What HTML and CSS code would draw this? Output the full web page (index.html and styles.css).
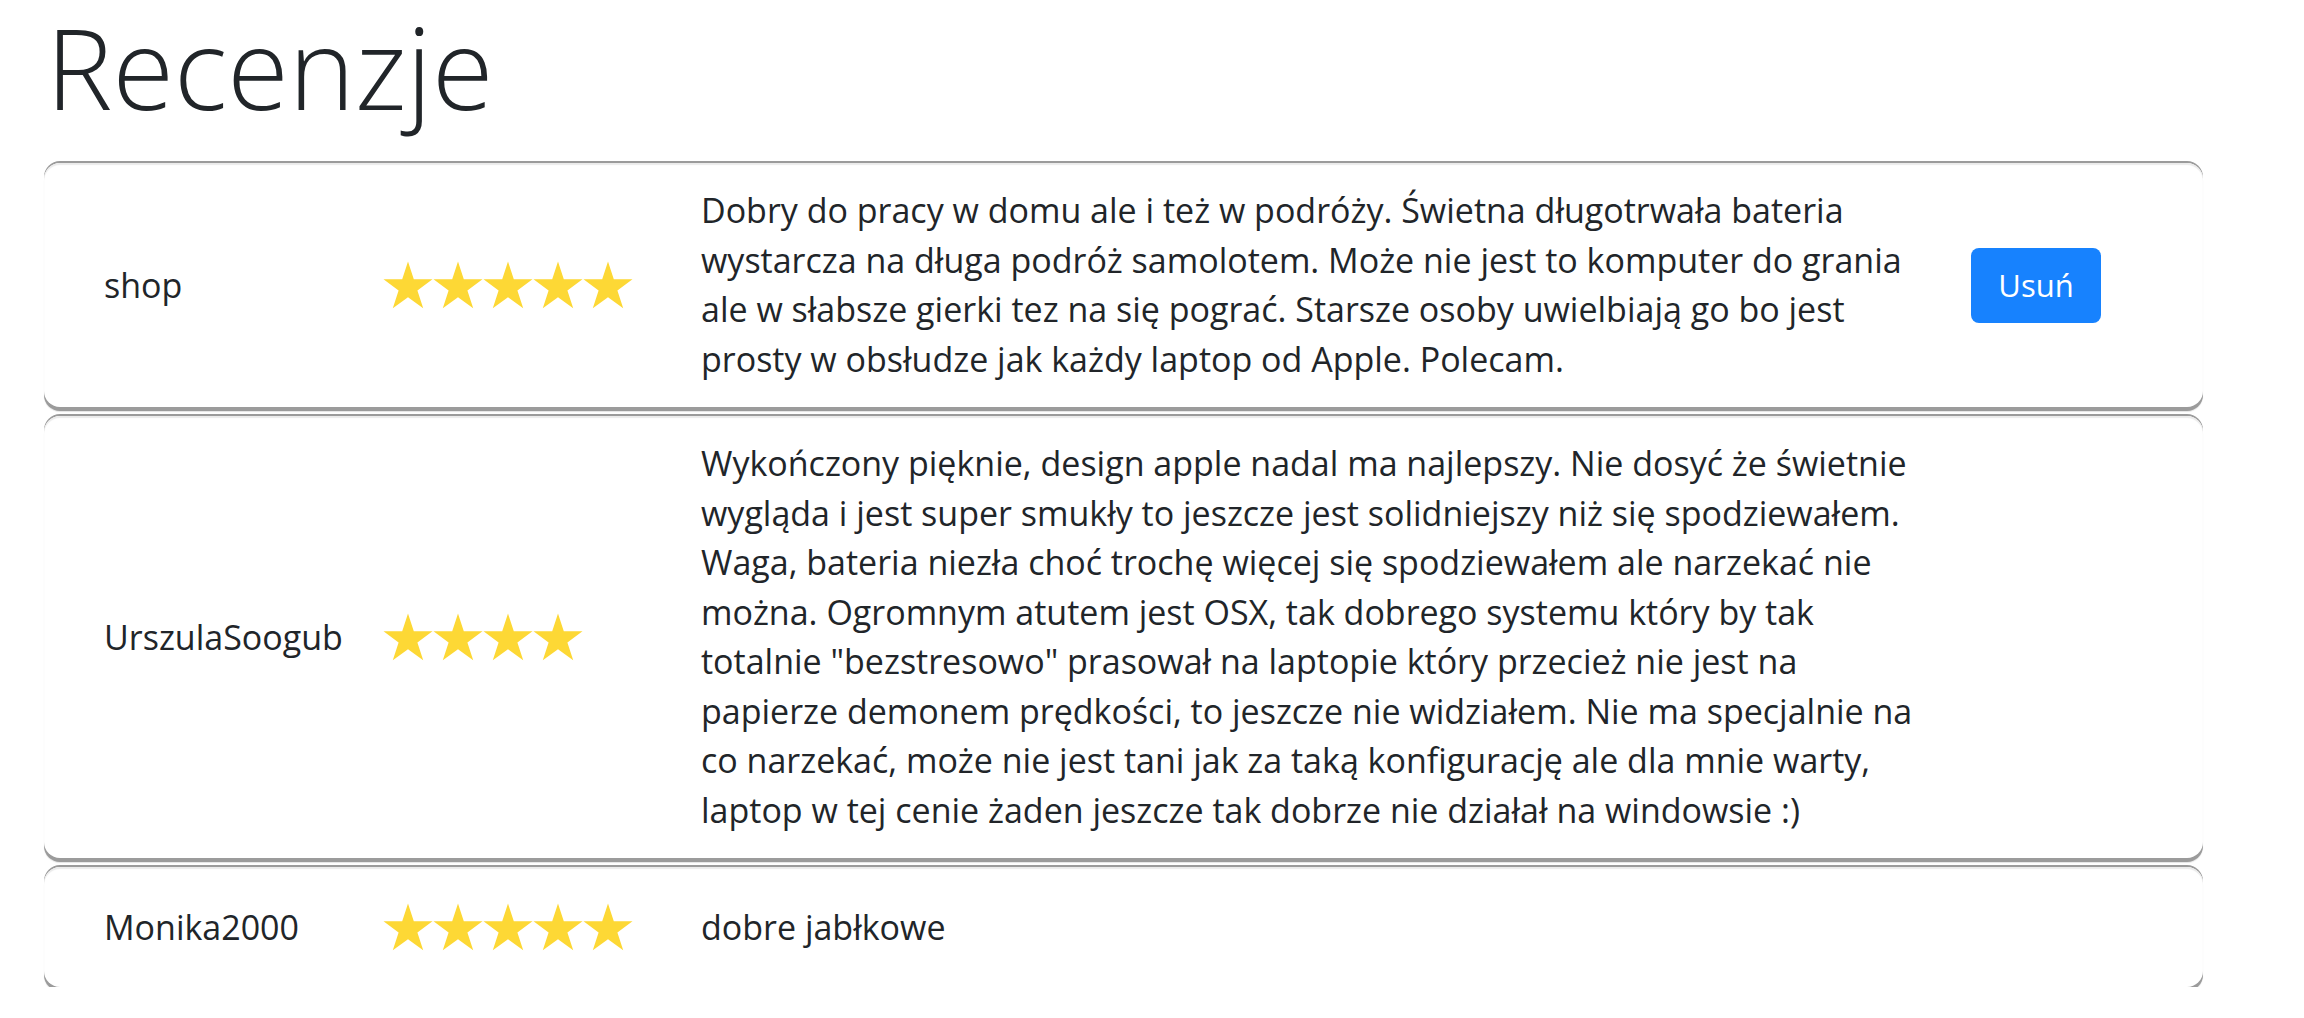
FILE: index.html
```html
<!DOCTYPE html>
<html lang="pl">
<head>
<meta charset="utf-8">
<title>Recenzje</title>
<link rel="stylesheet" href="styles.css">
</head>
<body>
<svg class="defs" width="0" height="0" aria-hidden="true">
  <symbol id="star" viewBox="0 0 50 47">
    <polygon points="25,0 30.8,17.8 49.5,17.8 34.4,28.9 40.2,46.7 25,35.7 9.8,46.7 15.6,28.9 0.5,17.8 19.2,17.8"/>
  </symbol>
</svg>
<main class="page">
  <h1 class="title">Recenzje</h1>
  <section class="reviews">
    <article class="review">
      <div class="author">shop</div>
      <div class="stars">
        <svg class="star"><use href="#star"/></svg><svg class="star"><use href="#star"/></svg><svg class="star"><use href="#star"/></svg><svg class="star"><use href="#star"/></svg><svg class="star"><use href="#star"/></svg>
      </div>
      <p class="text">Dobry do pracy w domu ale i też w podróży. Świetna długotrwała bateria wystarcza na długa podróż samolotem. Może nie jest to komputer do grania ale w słabsze gierki tez na się pograć. Starsze osoby uwielbiają go bo jest prosty w obsłudze jak każdy laptop od Apple. Polecam.</p>
      <div class="actions"><button class="btn-delete" type="button">Usuń</button></div>
    </article>
    <article class="review">
      <div class="author">UrszulaSoogub</div>
      <div class="stars">
        <svg class="star"><use href="#star"/></svg><svg class="star"><use href="#star"/></svg><svg class="star"><use href="#star"/></svg><svg class="star"><use href="#star"/></svg>
      </div>
      <p class="text">Wykończony pięknie, design apple nadal ma najlepszy. Nie dosyć że świetnie wygląda i jest super smukły to jeszcze jest solidniejszy niż się spodziewałem. Waga, bateria niezła choć trochę więcej się spodziewałem ale narzekać nie można. Ogromnym atutem jest OSX, tak dobrego systemu który by tak totalnie "bezstresowo" prasował na laptopie który przecież nie jest na papierze demonem prędkości, to jeszcze nie widziałem. Nie ma specjalnie na co narzekać, może nie jest tani jak za taką konfigurację ale dla mnie warty, laptop w tej cenie żaden jeszcze tak dobrze nie działał na windowsie :)</p>
      <div class="actions"></div>
    </article>
    <article class="review">
      <div class="author">Monika2000</div>
      <div class="stars">
        <svg class="star"><use href="#star"/></svg><svg class="star"><use href="#star"/></svg><svg class="star"><use href="#star"/></svg><svg class="star"><use href="#star"/></svg><svg class="star"><use href="#star"/></svg>
      </div>
      <p class="text">dobre jabłkowe</p>
      <div class="actions"></div>
    </article>
  </section>
</main>
</body>
</html>
```

FILE: styles.css
```css
html, body {
  margin: 0;
  padding: 0;
  background: #ffffff;
}

body {
  font-family: "Open Sans", "Noto Sans", "Liberation Sans", sans-serif;
  font-size: 34px;
  line-height: 49.5px;
  color: #212529;
}

.defs {
  position: absolute;
  width: 0;
  height: 0;
  overflow: hidden;
}

.page {
  padding: 0 101px 0 44px;
}

.title {
  margin: 0;
  padding-left: 2px;
  font-size: 112px;
  font-weight: 300;
  line-height: 1.2;
  color: #212529;
}

.reviews {
  margin-top: 29px;
  display: flex;
  flex-direction: column;
  gap: 9px;
}

.review {
  display: grid;
  grid-template-columns: 281px 316px 1230px 1fr;
  align-items: center;
  padding: 23px 0 23px 60px;
  background: #ffffff;
  border-radius: 16px;
  box-shadow:
    0 -2px 0 #9b9b9b,
    0 4px 0 #9b9b9b,
    0 5px 1px #e4e4e4,
    inset 0 2px 1px #ebebeb;
}

.author {
  white-space: nowrap;
}

.stars {
  display: flex;
  align-items: center;
  height: 74px;
  margin-left: -2px;
}

.star {
  width: 50px;
  height: 48px;
  fill: #fdd835;
  display: block;
}

.text {
  margin: 0;
}

.actions {
  display: flex;
  justify-content: flex-start;
  padding-left: 40px;
}

.btn-delete {
  width: 130px;
  height: 75px;
  padding: 0;
  border: none;
  border-radius: 8px;
  background: #1782fe;
  color: #ffffff;
  font-family: "Open Sans", "Noto Sans", "Liberation Sans", sans-serif;
  font-size: 31px;
  line-height: 1;
}
```
